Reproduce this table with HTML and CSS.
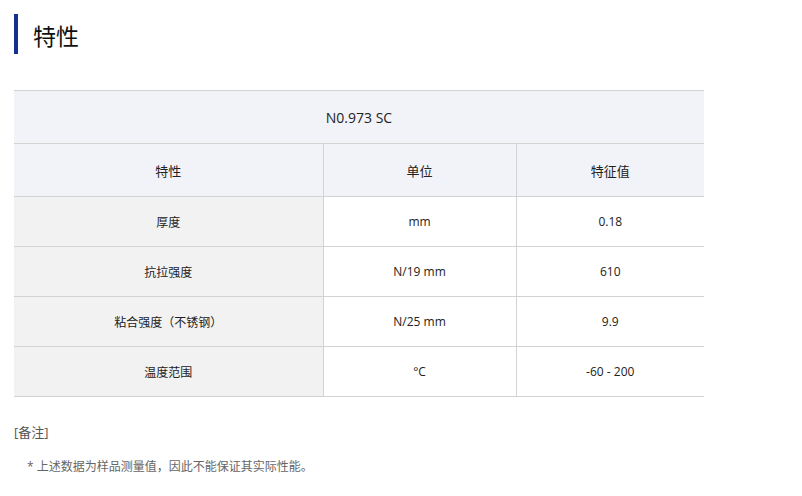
FILE: index.html
```html
<!DOCTYPE html>
<html lang="zh-CN">
<head>
<meta charset="utf-8">
<title>特性</title>
<link rel="stylesheet" href="styles.css">
</head>
<body>
<div class="page">
  <h2 class="section-title">特性</h2>
  <table class="spec">
    <colgroup>
      <col class="c1"><col class="c2"><col class="c3">
    </colgroup>
    <thead>
      <tr class="model-row"><th colspan="3">N0.973 SC</th></tr>
      <tr class="head-row"><th>特性</th><th>单位</th><th>特征值</th></tr>
    </thead>
    <tbody>
      <tr><td class="label">厚度</td><td>mm</td><td>0.18</td></tr>
      <tr><td class="label">抗拉强度</td><td>N/19 mm</td><td>610</td></tr>
      <tr><td class="label">粘合强度（不锈钢）</td><td>N/25 mm</td><td>9.9</td></tr>
      <tr><td class="label">温度范围</td><td>°C</td><td>-60 - 200</td></tr>
    </tbody>
  </table>
  <p class="note-title">[备注]</p>
  <p class="note">* 上述数据为样品测量值，因此不能保证其实际性能。</p>
</div>
</body>
</html>
```
FILE: styles.css
```css
html, body {
  margin: 0;
  padding: 0;
  background: #fff;
}
body {
  font-family: "Open Sans", "Noto Sans CJK SC", sans-serif;
  color: #222;
}
.page {
  padding: 14px 14px 0 14px;
}
.section-title {
  margin: 0;
  height: 40px;
  line-height: 42px;
  border-left: 4px solid #14318f;
  padding-left: 15px;
  font-size: 23px;
  font-weight: normal;
  color: #111;
  font-family: "Noto Sans CJK SC", sans-serif;
}
.spec {
  margin-top: 36px;
  width: 690px;
  border-collapse: collapse;
  font-size: 12px;
  table-layout: fixed;
}
.spec th, .spec td {
  border-top: 1px solid #d3d3d3;
  border-bottom: 1px solid #d3d3d3;
  text-align: center;
  font-weight: normal;
  padding: 0;
}
.spec th + th, .spec td + td {
  border-left: 1px solid #d3d3d3;
}
.model-row th {
  background: #f2f3f8;
  height: 52px;
  font-size: 14px;
}
.head-row th {
  background: #f2f3f8;
  height: 52px;
  font-size: 13px;
}
.c1 { width: 309px; }
.c2 { width: 193px; }
.c3 { width: 188px; }
.spec td {
  height: 49px;
}
.spec td.label {
  background: #f2f2f2;
}
.note-title {
  margin: 26px 0 0 0;
  font-size: 13px;
  color: #555;
  line-height: 18px;
}
.note {
  margin: 17px 0 0 13px;
  font-size: 12px;
  color: #666;
  line-height: 18px;
}
```
